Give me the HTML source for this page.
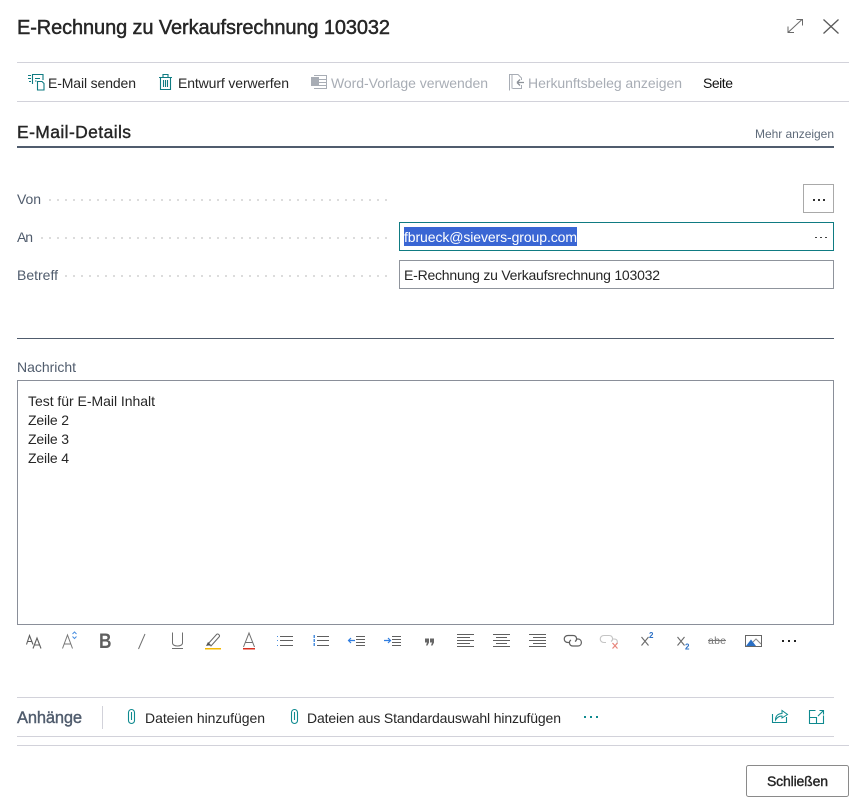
<!DOCTYPE html>
<html lang="de">
<head>
<meta charset="utf-8">
<title>E-Rechnung</title>
<style>
html,body{margin:0;padding:0;background:#fff;width:861px;height:809px;overflow:hidden}
svg{display:block}
text{font-family:"Liberation Sans",sans-serif;font-size:14px;fill:#262626}
.semi{stroke-width:.4px}
.lab{fill:#505c6d}
.dis{fill:#a8adb5}
.ic{fill:none;stroke:#0f7b82;stroke-width:1.1}
.dic{fill:none;stroke:#a8adb5;stroke-width:1}
.gr{fill:none;stroke:#5f5f5f;stroke-width:1.1}
</style>
</head>
<body>
<svg width="861" height="809" viewBox="0 0 861 809" xmlns="http://www.w3.org/2000/svg">
<rect width="861" height="809" fill="#fff"/>

<!-- Title -->
<text x="17" y="34" style="font-size:20px;stroke:#262626;stroke-width:.45px" textLength="373" lengthAdjust="spacing">E-Rechnung zu Verkaufsrechnung 103032</text>
<path d="M788 32.5L802 19.500M796.500 19.500H802.500V25.500M788 26.500V32.500H794" fill="none" stroke="#6a6a6a" stroke-width="1"/>
<path d="M823.500 19.500L838.500 33.500M838.500 19.500L823.500 33.500" fill="none" stroke="#5a5a5a" stroke-width="1.300"/>

<!-- Toolbar lines -->
<rect x="17" y="62" width="832" height="1" fill="#d2d2da"/>
<rect x="17" y="101" width="832" height="1" fill="#d2d2da"/>

<!-- E-Mail senden icon -->
<g class="ic">
<path d="M28 75.500h3M28 78.500h3M29 81.500h2M32.500 84V74.500H43V80"/>
<path d="M35 78.500H40M35 81H36.500"/>
<path d="M37.500 81.500H42L44 83.500V90H37.500Z"/>
</g>
<text x="48" y="88" textLength="88" lengthAdjust="spacing">E-Mail senden</text>

<!-- Trash icon -->
<g class="ic">
<path d="M159 77.500H172M163 77V74.500H168V77M160.500 77.500V89.500H170.500V77.500M163.500 80V87M165.500 80V87M167.500 80V87"/>
</g>
<text x="178" y="88" textLength="111" lengthAdjust="spacing">Entwurf verwerfen</text>

<!-- Word icon -->
<g class="dic">
<path d="M314 75.500H326.500V88.500H314"/>
<path d="M319 79.500H326M319 82.500H326M319 85.500H326"/>
</g>
<rect x="311" y="77" width="8" height="9" fill="#a8adb5"/>
<text x="331" y="88" class="dis" textLength="157" lengthAdjust="spacing">Word-Vorlage verwenden</text>

<!-- Herkunft icon -->
<g class="dic">
<path d="M509.500 90.500V74.500H517M512 88.500V75"/>
<path d="M512.500 74.500H518L521.500 78V80M512.500 88.500H521.500V85"/>
</g>
<path d="M517 82.500H524M517 82.500L520 79.500M517 82.500L520 85.500" fill="none" stroke="#8d9299" stroke-width="1.300"/>
<text x="528" y="88" class="dis" textLength="154" lengthAdjust="spacing">Herkunftsbeleg anzeigen</text>

<text x="703" y="88" style="fill:#111" textLength="30" lengthAdjust="spacing">Seite</text>

<!-- Section header -->
<text x="17" y="138" style="font-size:17.500px;stroke:#262626" class="semi" textLength="114" lengthAdjust="spacing">E-Mail-Details</text>
<text x="755" y="138" style="font-size:12px;fill:#5f6b7a" textLength="79" lengthAdjust="spacing">Mehr anzeigen</text>
<rect x="17" y="146" width="817" height="2" fill="#505c6d"/>

<!-- Fields -->
<text x="17" y="204" class="lab" textLength="24" lengthAdjust="spacing">Von</text>
<text x="17" y="242" class="lab" textLength="16" lengthAdjust="spacing">An</text>
<text x="17" y="280" class="lab" textLength="41" lengthAdjust="spacing">Betreff</text>
<g stroke="#dcdcdc" stroke-width="2" stroke-dasharray="2 6">
<path d="M49 200H388M41 238H388M65 276H388"/>
</g>

<rect x="803.500" y="184.500" width="30" height="28" fill="#fff" stroke="#a9a9a9"/>
<g fill="#333"><rect x="813" y="199" width="2" height="2"/><rect x="818" y="199" width="2" height="2"/><rect x="823" y="199" width="2" height="2"/></g>

<rect x="399.500" y="222.500" width="434" height="28" fill="#fff" stroke="#0f7b82"/>
<rect x="404" y="227" width="173" height="19" fill="#3a66d4"/>
<text x="404" y="242" style="fill:#fff" textLength="173" lengthAdjust="spacing">fbrueck@sievers-group.com</text>
<g fill="#444"><rect x="815" y="237" width="2" height="1"/><rect x="820" y="237" width="2" height="1"/><rect x="825" y="237" width="2" height="1"/></g>

<rect x="399.500" y="260.500" width="434" height="28" fill="#fff" stroke="#8f949c"/>
<text x="404" y="280" textLength="256" lengthAdjust="spacing">E-Rechnung zu Verkaufsrechnung 103032</text>

<rect x="17" y="338" width="817" height="1" fill="#505c6d"/>

<!-- Message -->
<text x="17" y="372" class="lab" textLength="59" lengthAdjust="spacing">Nachricht</text>
<rect x="17.500" y="380.500" width="816" height="244" fill="#fff" stroke="#8a8f99"/>
<text x="28" y="406" textLength="127" lengthAdjust="spacing">Test für E-Mail Inhalt</text>
<text x="28" y="425" textLength="41" lengthAdjust="spacing">Zeile 2</text>
<text x="28" y="444" textLength="41" lengthAdjust="spacing">Zeile 3</text>
<text x="28" y="463" textLength="41" lengthAdjust="spacing">Zeile 4</text>

<!-- Editor toolbar -->
<path d="M26.500 644.500L29.500 635.500L33 644.500M27.500 641.500H32M33 648.500L37 638L41 648.500M34.500 645H39.500" class="gr"/>
<path d="M62.500 648.500L67.500 635L72.500 648.500M64.500 644H70.500" fill="none" stroke="#777" stroke-width="1"/>
<path d="M72.500 634L74.500 632L76.500 634M72.500 636.500L74.500 638.500L76.500 636.500" fill="none" stroke="#4a8fe0" stroke-width="1"/>
<text x="99" y="648" style="font-size:21px;font-weight:bold;fill:#5f5f5f" textLength="12.500" lengthAdjust="spacingAndGlyphs">B</text>
<path d="M145 634L138.500 649" fill="none" stroke="#707070" stroke-width="1"/>
<path d="M172.500 632.500V643C172.500 647 182.500 647 182.500 643V632.500" fill="none" stroke="#707070" stroke-width="1"/>
<rect x="172" y="648" width="11" height="1" fill="#707070"/>
<path d="M208 644L216.500 634.500C218 633 220.500 635.500 219 637L211 646Z" fill="none" stroke="#666" stroke-width="1"/>
<path d="M206 646L208 642L211 645Z" fill="#555"/>
<rect x="205" y="648" width="16" height="1.500" fill="#f5b800"/>
<path d="M243.500 647L249 633L254.500 647M245.500 642.500H252.500" fill="none" stroke="#707070" stroke-width="1"/>
<rect x="243" y="648" width="12" height="1.500" fill="#d83020"/>

<!-- lists -->
<g fill="#5f5f5f">
<rect x="280" y="636" width="13" height="1"/><rect x="280" y="640" width="13" height="1"/><rect x="280" y="645" width="13" height="1"/>
<rect x="317" y="636" width="12" height="1"/><rect x="317" y="640" width="12" height="1"/><rect x="317" y="645" width="12" height="1"/>
<rect x="356" y="636" width="9" height="1"/><rect x="356" y="639" width="9" height="1"/><rect x="356" y="642" width="9" height="1"/><rect x="356" y="645" width="9" height="1"/>
<rect x="392" y="636" width="9" height="1"/><rect x="392" y="639" width="9" height="1"/><rect x="392" y="642" width="9" height="1"/><rect x="392" y="645" width="9" height="1"/>
</g>
<g fill="#4a8fe0">
<rect x="277" y="636" width="1" height="1"/><rect x="277" y="640" width="1" height="1"/><rect x="277" y="645" width="1" height="1"/>
<rect x="313.500" y="635" width="1.500" height="3"/><rect x="313.500" y="639" width="1.500" height="3"/><rect x="313.500" y="643" width="1.500" height="3"/>
</g>
<path d="M355 640.500H348.500M351 638L348.500 640.500L351 643" fill="none" stroke="#2f7de0" stroke-width="1.200"/>
<path d="M384 640.500H390.500M388 638L390.500 640.500L388 643" fill="none" stroke="#2f7de0" stroke-width="1.200"/>
<g fill="#666">
<path d="M425 638.500H429V642.500L427.500 645.500H426L427 642.500H425Z"/>
<path d="M430 638.500H434V642.500L432.500 645.500H431L432 642.500H430Z"/>
</g>

<!-- alignment -->
<g fill="#5f5f5f">
<rect x="457" y="634" width="17" height="1"/><rect x="457" y="637" width="13" height="1"/><rect x="457" y="640" width="17" height="1"/><rect x="457" y="643" width="13" height="1"/><rect x="457" y="646" width="17" height="1"/>
<rect x="493" y="634" width="17" height="1"/><rect x="496" y="637" width="11" height="1"/><rect x="493" y="640" width="17" height="1"/><rect x="496" y="643" width="11" height="1"/><rect x="493" y="646" width="17" height="1"/>
<rect x="529" y="634" width="17" height="1"/><rect x="533" y="637" width="13" height="1"/><rect x="529" y="640" width="17" height="1"/><rect x="533" y="643" width="13" height="1"/><rect x="529" y="646" width="17" height="1"/>
</g>

<!-- link -->
<g fill="none" stroke="#5f5f5f" stroke-width="1.200">
<path d="M570 642.500H568C563 642.500 563 635.500 568 635.500H573C577 635.500 577.500 640 575 641.500"/>
<path d="M576 639H578C582.500 639 582.500 646 578 646H573C569 646 568.500 641.500 571 640"/>
</g>
<g fill="none" stroke="#c4c4c4" stroke-width="1.100">
<path d="M606 642.500H604C599 642.500 599 635.500 604 635.500H609C613 635.500 613.500 640 611 641.500"/>
<path d="M612 639H614C618 639 618 643 616 644"/>
</g>
<path d="M612.500 643L617.500 648.500M617.500 643L612.500 648.500" fill="none" stroke="#e8847a" stroke-width="1.200"/>

<!-- super/sub -->
<path d="M641.500 637L648.500 645.500M648.500 637L641.500 645.500" fill="none" stroke="#6a6a6a" stroke-width="1.100"/>
<text x="649" y="638" style="font-size:8px;font-weight:bold;fill:#2a6fc4">2</text>
<path d="M677.500 637L684.500 645.500M684.500 637L677.500 645.500" fill="none" stroke="#6a6a6a" stroke-width="1.100"/>
<text x="685" y="649.500" style="font-size:8px;font-weight:bold;fill:#2a6fc4">2</text>
<text x="708" y="644" style="font-size:10.500px;fill:#777" textLength="18" lengthAdjust="spacing">abe</text>
<rect x="708" y="640" width="18" height="1" fill="#777"/>

<!-- image -->
<rect x="745.500" y="635.500" width="16" height="11" fill="#fff" stroke="#666"/>
<path d="M746 646L751 639.500L756 646Z" fill="#2a6fc4"/>
<path d="M753 642L756 639L761 644" fill="none" stroke="#8a8a8a" stroke-width="1"/>
<g fill="#222"><rect x="782" y="640" width="2" height="2"/><rect x="788" y="640" width="2" height="2"/><rect x="794" y="640" width="2" height="2"/></g>

<!-- Attachments -->
<rect x="17" y="697" width="817" height="1" fill="#d2d2da"/>
<rect x="17" y="736" width="817" height="1" fill="#d2d2da"/>
<rect x="17" y="745" width="832" height="1" fill="#d2d2da"/>
<rect x="102" y="706" width="1" height="23" fill="#d2d2da"/>
<text x="17" y="723" class="lab semi" style="font-size:16.500px;stroke:#505c6d" textLength="65" lengthAdjust="spacing">Anhänge</text>

<rect x="128.500" y="709.500" width="6" height="14" rx="3" fill="none" stroke="#0f8a8f" stroke-width="1.100"/>
<path d="M131.500 712V720" fill="none" stroke="#0f8a8f" stroke-width="1.100"/>
<text x="145" y="723" textLength="120" lengthAdjust="spacing">Dateien hinzufügen</text>
<rect x="291.500" y="709.500" width="6" height="14" rx="3" fill="none" stroke="#0f8a8f" stroke-width="1.100"/>
<path d="M294.500 712V720" fill="none" stroke="#0f8a8f" stroke-width="1.100"/>
<text x="307" y="723" textLength="254" lengthAdjust="spacing">Dateien aus Standardauswahl hinzufügen</text>
<g fill="#0f8a8f"><rect x="584" y="716" width="2" height="2"/><rect x="590" y="716" width="2" height="2"/><rect x="596" y="716" width="2" height="2"/></g>

<!-- share -->
<path d="M772.500 714V722.500H786.500V717" fill="none" stroke="#0f8a8f" stroke-width="1.100"/>
<path d="M775.500 720C775.500 715 779 713.500 782 713.500V710.500L787.500 714.500L782 718V716C779.500 716 777 717.500 775.500 720Z" fill="none" stroke="#0f8a8f" stroke-width="1"/>
<!-- open -->
<path d="M815.500 710.500H809.500V723.500H823.500V715.500M809.500 717.500H816.500V723.500M818 716L823 711M819.500 710.500H823.500V714.500" fill="none" stroke="#0f8a8f" stroke-width="1.100"/>

<!-- Close button -->
<rect x="746.500" y="765.500" width="102" height="31" rx="2" ry="2" fill="#fff" stroke="#8a8a8a"/>
<text x="767" y="786" class="semi" style="stroke:#262626" textLength="61" lengthAdjust="spacing">Schließen</text>
</svg>
</body>
</html>
